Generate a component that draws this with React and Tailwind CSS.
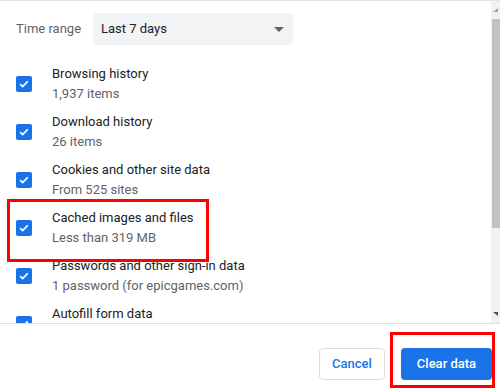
const ITEMS = [
  { title: 'Browsing history', sub: '1,937 items' },
  { title: 'Download history', sub: '26 items' },
  { title: 'Cookies and other site data', sub: 'From 525 sites' },
  { title: 'Cached images and files', sub: 'Less than 319 MB' },
  { title: 'Passwords and other sign-in data', sub: '1 password (for epicgames.com)' },
  { title: 'Autofill form data', sub: '\u00a0' },
];

const Check = () => (
  <span className="flex h-4 w-4 shrink-0 items-center justify-center rounded-[2px] bg-[#1a73e8]">
    <svg viewBox="0 0 16 16" className="h-3 w-3" fill="none" stroke="white" strokeWidth="2.4">
      <path d="M3 8.3l3.2 3.1L13 4.6" />
    </svg>
  </span>
);

export default function App() {
  return (
    <div
      className="relative flex h-[390px] w-[500px] flex-col overflow-hidden bg-white text-[13px]"
      style={{ fontFamily: 'Roboto, "Liberation Sans", sans-serif' }}
    >
      {/* Scrollable body */}
      <div className="flex h-[323px] border-t border-[#e3e3e3]">
        <div className="flex-1 overflow-hidden">
          <div className="flex h-[59px] items-start pl-4 pt-3">
            <span className="w-[77px] leading-8 text-[#5f6368]">Time range</span>
            <div className="flex h-8 w-[200px] items-center justify-between rounded-[4px] bg-[#f1f3f4] pl-2 pr-2">
              <span className="text-[#202124]">Last 7 days</span>
              <svg viewBox="0 0 10 5" className="mr-[1px] h-[5px] w-[10px]" fill="#5f6368">
                <path d="M0 0h10L5 5z" />
              </svg>
            </div>
          </div>
          {ITEMS.map((it) => (
            <div key={it.title} className="flex h-12 items-center pl-4">
              <Check />
              <div className="ml-5 flex flex-col">
                <span className="leading-5 text-[#202124]">{it.title}</span>
                <span className="leading-5 text-[#5f6368]">{it.sub}</span>
              </div>
            </div>
          ))}
        </div>
        {/* Scrollbar */}
        <div className="flex w-[9px] flex-col items-end bg-[#f1f1f1]">
          <div className="flex h-[18px] w-full items-center justify-center">
            <svg viewBox="0 0 5 4" className="h-[4px] w-[5px]" fill="#a3a3a3">
              <path d="M5 0v4H0z" />
            </svg>
          </div>
          <div className="h-[209px] w-[8px] bg-[#c1c1c1]" />
          <div className="flex-1" />
          <div className="flex h-[18px] w-full items-center justify-center">
            <svg viewBox="0 0 5 4" className="h-[4px] w-[5px]" fill="#505050">
              <path d="M0 0h5v4z" />
            </svg>
          </div>
        </div>
      </div>

      {/* Footer */}
      <div className="flex flex-1 items-start justify-end gap-4 border-t border-[#e0e0e0] pr-2 pt-[24px]">
        <button className="h-8 w-[66px] rounded-[4px] border border-[#dadce0] bg-white font-medium text-[#1a73e8]">
          Cancel
        </button>
        <button className="h-8 w-[91px] rounded-[4px] bg-[#1a73e8] font-medium text-white">
          Clear data
        </button>
      </div>

      {/* Annotation boxes */}
      <div className="absolute left-[7px] top-[199px] h-[63px] w-[202px] border-[3px] border-[#ff0000]" />
      <div className="absolute left-[390px] top-[332px] h-[56px] w-[105px] border-[3px] border-[#ff0000]" />
    </div>
  );
}
